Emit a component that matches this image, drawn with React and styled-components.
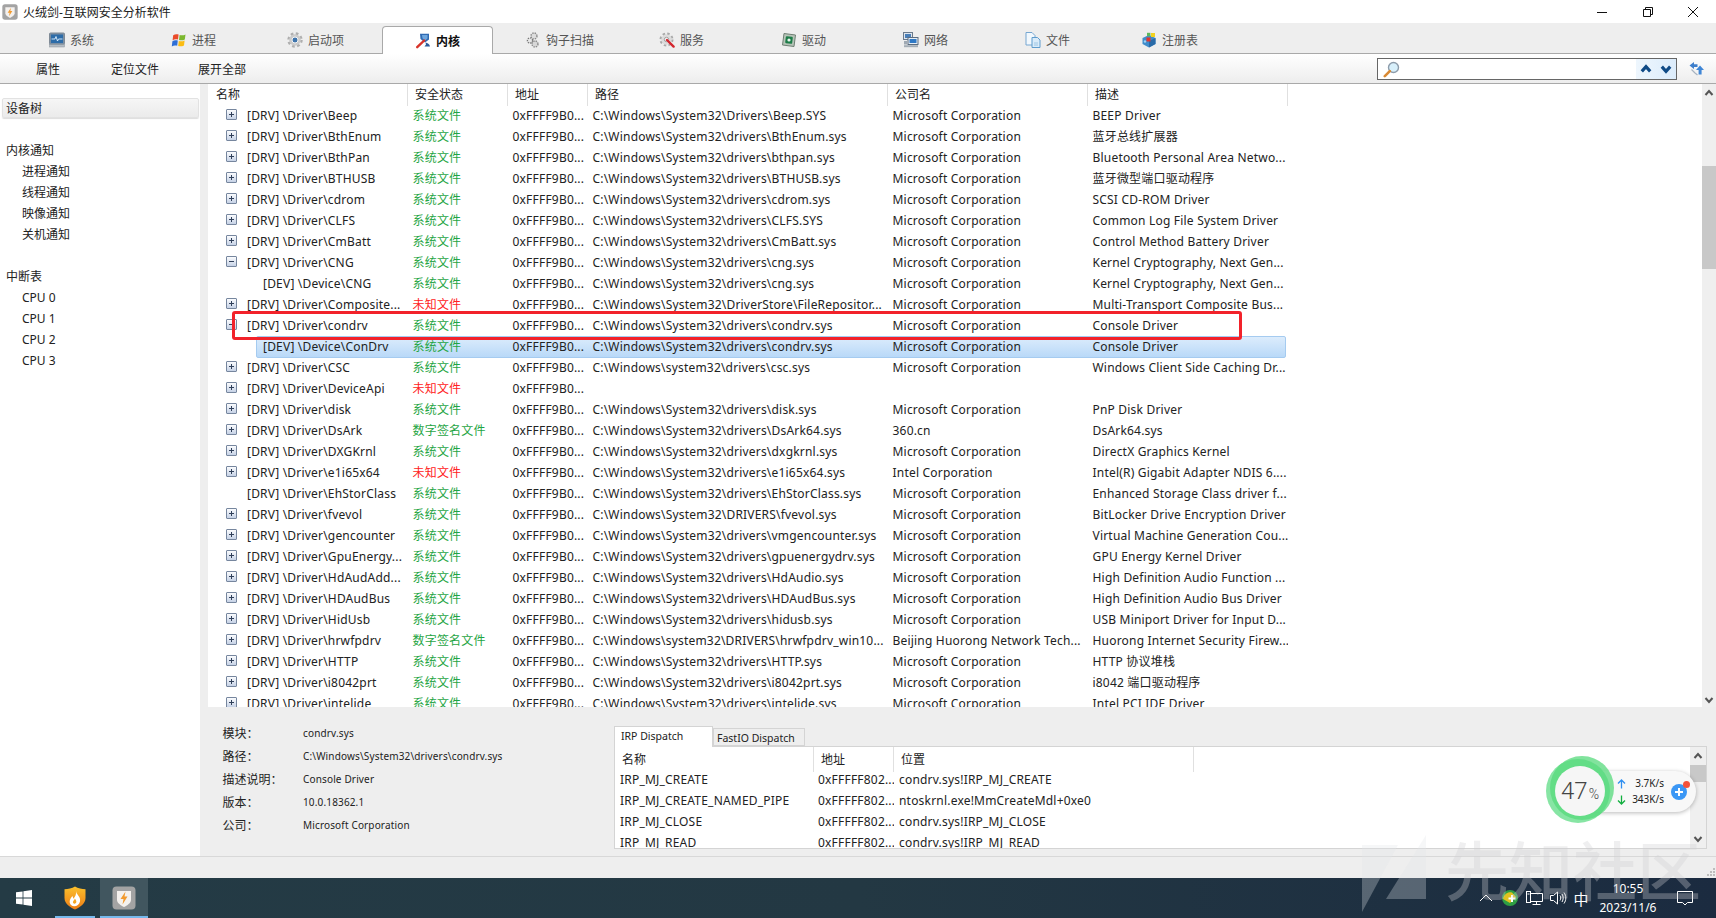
import React from "react";
import styled, { createGlobalStyle } from "styled-components";

const FONT = `"Noto Sans", "Noto Sans CJK SC", sans-serif`;

const Global = createGlobalStyle`
  html, body { margin: 0; padding: 0; background: #fff; }
  body { font-family: ${FONT}; font-size: 12px; color: #222; overflow: hidden; }
  * { box-sizing: border-box; }
`;

const Page = styled.div`
  position: relative;
  width: 1716px;
  height: 918px;
  overflow: hidden;
  display: flex;
  flex-direction: column;
`;

/* ---------- title bar ---------- */
const TitleBar = styled.header`
  height: 23px;
  flex: none;
  display: flex;
  align-items: center;
  padding-left: 2px;
  background: #fff;
`;
const TitleText = styled.span`
  margin-left: 5px;
  font-size: 12px;
  color: #222;
`;
const WindowButtons = styled.div`
  margin-left: auto;
  display: flex;
  padding-right: 0;
`;
const WindowButton = styled.button`
  width: 45.67px;
  height: 20px;
  border: 0;
  padding: 0;
  background: none;
  display: flex;
  align-items: center;
  justify-content: center;
`;

/* ---------- tabs ---------- */
const TabStrip = styled.nav`
  height: 31px;
  flex: none;
  display: flex;
  padding-left: 10.5px;
  background: #eee;
  border-bottom: 1px solid #a9a9a9;
`;
const Tab = styled.div`
  width: 122px;
  height: ${(p) => (p.$active ? "28px" : "27px")};
  margin-top: 3px;
  display: flex;
  align-items: center;
  justify-content: center;
  gap: 5px;
  color: ${(p) => (p.$active ? "#111" : "#555")};
  font-weight: ${(p) => (p.$active ? 700 : 400)};
  background: ${(p) => (p.$active ? "#fff" : "transparent")};
  border: ${(p) => (p.$active ? "1px solid #a9a9a9" : "0")};
  border-bottom: 0;
  border-radius: 4px 4px 0 0;
  ${(p) => (p.$active ? "margin-left: 5.5px; margin-right: 5.5px; width: 111px;" : "")}
`;

/* ---------- toolbar ---------- */
const Toolbar = styled.div`
  height: 30px;
  flex: none;
  display: flex;
  align-items: center;
  padding-left: 4.5px;
  background: linear-gradient(#fff, #ededed);
  border-bottom: 1px solid #a9a9a9;
`;
const ToolButton = styled.div`
  width: 87px;
  text-align: center;
  color: #222;
`;
const SearchBox = styled.div`
  margin-left: auto;
  width: 300px;
  height: 22px;
  display: flex;
  align-items: stretch;
  border: 1px solid #666;
  background: #fff;
`;
const SearchIconWrap = styled.div`
  flex: 1;
  padding: 2px 0 0 5px;
`;
const SearchArrows = styled.div`
  width: 40px;
  display: flex;
  align-items: center;
  justify-content: space-around;
  background: linear-gradient(90deg, #eef6fd, #dcecfb);
`;
const SyncWrap = styled.div`
  width: 39px;
  display: flex;
  justify-content: center;
`;

/* ---------- body ---------- */
const Body = styled.main`
  height: 773px;
  flex: none;
  display: flex;
  border-bottom: 1px solid #d8d8d8;
`;
const Sidebar = styled.aside`
  width: 200px;
  flex: none;
  background: #fff;
  padding-top: 14px;
`;
const SideButton = styled.div`
  height: 20px;
  margin: 0 1px 21.5px 2px;
  padding-left: 3px;
  line-height: 19px;
  border: 1px solid #e2e2e2;
  border-radius: 2px;
  background: linear-gradient(#f6f6f6, #ebebeb);
  box-shadow: 0 1px 1px #ddd;
`;
const SideGroup = styled.div`
  margin-bottom: 21px;
`;
const SideHeading = styled.div`
  height: 21px;
  line-height: 21px;
  padding-left: 6px;
`;
const SideItem = styled.div`
  height: 21px;
  line-height: 21px;
  padding-left: 22px;
`;
const RightColumn = styled.div`
  flex: 1;
  min-width: 0;
  background: #eee;
  display: flex;
  flex-direction: column;
`;
const TableArea = styled.section`
  height: 623px;
  flex: none;
  margin-left: 8px;
  display: flex;
  background: #fff;
`;
const TableMain = styled.div`
  flex: 1;
  min-width: 0;
  display: flex;
  flex-direction: column;
`;
const HeaderRow = styled.div`
  height: 21px;
  flex: none;
  display: grid;
  grid-template-columns: 200px 100px 80px 300px 200px 200px;
`;
const HeaderCell = styled.div`
  padding-left: 7px;
  line-height: 22px;
  border-right: 1px solid #e0e0e0;
  color: #222;
  &:first-child {
    padding-left: 8px;
  }
`;
const Rows = styled.div`
  flex: 1;
  overflow: hidden;
`;
const Row = styled.div`
  position: relative;
  height: 21px;
  display: grid;
  grid-template-columns: 200px 100px 80px 300px 200px 200px;
  line-height: 21px;
  letter-spacing: 0.2px;
  &::before {
    content: "";
    display: ${(p) => (p.$selected ? "block" : "none")};
    position: absolute;
    left: 47.5px;
    width: 1028px;
    top: 0;
    height: 20px;
    border: 1px solid #a5cbf0;
    border-radius: 2px;
    background: linear-gradient(#dcecfc, #b9d9f8);
  }
`;
const Cell = styled.div`
  position: relative;
  padding-left: 4.5px;
  white-space: nowrap;
  overflow: hidden;
  color: ${(p) => p.$color || "#222"};
`;
const NameCell = styled.div`
  position: relative;
  display: flex;
  align-items: center;
  padding-left: ${(p) => (p.$child ? "55px" : "18px")};
  white-space: nowrap;
  overflow: hidden;
`;
const Expander = styled.span`
  position: relative;
  flex: none;
  width: 11px;
  height: 11px;
  margin: 0 10px 3px 0;
  border: 1px solid #76869e;
  border-radius: 1px;
  background: linear-gradient(#fbfcfe, #c6d2e6);
  visibility: ${(p) => (p.$hidden ? "hidden" : "visible")};
  &::before {
    content: "";
    position: absolute;
    left: 2px;
    top: 4px;
    width: 5px;
    height: 1px;
    background: #30405a;
  }
  &::after {
    content: "";
    display: ${(p) => (p.$open ? "none" : "block")};
    position: absolute;
    left: 4px;
    top: 2px;
    width: 1px;
    height: 5px;
    background: #30405a;
  }
`;
const Scrollbar = styled.div`
  width: ${(p) => p.$width}px;
  flex: none;
  display: flex;
  flex-direction: column;
  background: #efefef;
`;
const ScrollArrow = styled.div`
  height: ${(p) => p.$h}px;
  flex: none;
  display: flex;
  align-items: center;
  justify-content: center;
`;
const ScrollTrack = styled.div`
  flex: 1;
  min-height: 0;
`;
const ScrollThumb = styled.div`
  margin-top: ${(p) => p.$top}px;
  height: ${(p) => p.$h}px;
  background: #c8c8c8;
`;

/* ---------- bottom details ---------- */
const BottomPanel = styled.section`
  flex: 1;
  min-height: 0;
  display: flex;
`;
const Info = styled.div`
  width: 414px;
  flex: none;
  padding: 14.5px 0 0 22.5px;
`;
const InfoRow = styled.div`
  display: flex;
  height: 23px;
  line-height: 23px;
`;
const InfoLabel = styled.span`
  width: 80.5px;
  flex: none;
  color: #222;
`;
const InfoValue = styled.span`
  font-size: 10px;
  letter-spacing: 0.15px;
  color: #222;
`;
const Dispatch = styled.div`
  flex: 1;
  min-width: 0;
  margin: 19px 9px 0 0;
  display: flex;
  flex-direction: column;
`;
const DispatchTabs = styled.div`
  height: 20px;
  flex: none;
  display: flex;
  align-items: flex-end;
`;
const DispatchTab = styled.div`
  width: ${(p) => p.$w}px;
  height: ${(p) => (p.$active ? "21px" : "18px")};
  margin-bottom: ${(p) => (p.$active ? "-1px" : "0")};
  padding-left: ${(p) => (p.$active ? "6px" : "3px")};
  line-height: ${(p) => (p.$active ? "19px" : "18px")};
  font-size: 10.5px;
  position: relative;
  background: ${(p) => (p.$active ? "#fff" : "#eee")};
  border: 1px solid #d4d4d4;
  border-bottom: ${(p) => (p.$active ? "0" : "1px solid #d4d4d4")};
`;
const DispatchBox = styled.div`
  height: 103px;
  flex: none;
  display: flex;
  border: 1px solid #d4d4d4;
  background: #fff;
  overflow: hidden;
`;
const DispatchMain = styled.div`
  flex: 1;
  min-width: 0;
`;
const DispatchHead = styled.div`
  height: 22px;
  display: grid;
  grid-template-columns: 199px 80px 300px;
`;
const DispatchHeadCell = styled.div`
  padding-left: 7px;
  line-height: 25px;
  border-right: 1px solid #e0e0e0;
`;
const DispatchRow = styled.div`
  height: 21px;
  display: grid;
  grid-template-columns: 199px 80px 300px;
  line-height: 22px;
  letter-spacing: 0.2px;
`;
const DispatchCell = styled.div`
  padding-left: ${(p) => p.$pad}px;
  white-space: nowrap;
  overflow: hidden;
`;

/* ---------- status / taskbar ---------- */
const StatusBar = styled.div`
  height: 21px;
  flex: none;
  display: flex;
  justify-content: flex-end;
  align-items: flex-end;
  background: #eee;
`;
const Taskbar = styled.footer`
  height: 40px;
  flex: none;
  display: flex;
  align-items: stretch;
  background: linear-gradient(90deg, #243b45 0%, #233843 50%, #1b2b40 100%);
  color: #fff;
`;
const TaskStart = styled.div`
  width: 48px;
  display: flex;
  align-items: center;
  justify-content: center;
`;
const TaskApp = styled.div`
  width: ${(p) => p.$w}px;
  display: flex;
  align-items: center;
  justify-content: center;
  background: ${(p) => (p.$active ? "#41565f" : "transparent")};
  box-shadow: inset 0 -2px 0 ${(p) => (p.$line ? "#76b9ed" : "transparent")};
  margin: ${(p) => (p.$inset ? "0 5px 0 6.5px" : "0")};
`;
const Tray = styled.div`
  margin-left: auto;
  display: flex;
  align-items: center;
  padding-right: 10px;
`;
const TrayItem = styled.div`
  width: ${(p) => p.$w}px;
  display: flex;
  align-items: center;
  justify-content: center;
  font-size: ${(p) => p.$size || 12}px;
`;
const Clock = styled.div`
  width: 72px;
  height: 40px;
  display: flex;
  flex-direction: column;
  align-items: center;
  justify-content: center;
  gap: 3px;
  font-size: 12px;
  line-height: 16px;
  padding-bottom: 0;
`;

/* ---------- overlays ---------- */
const RedBox = styled.div`
  position: absolute;
  left: 232px;
  top: 310.5px;
  width: 1010px;
  height: 29px;
  border: 3px solid #f2222a;
  border-radius: 3px;
  pointer-events: none;
`;
const Widget = styled.div`
  position: absolute;
  left: 1546px;
  top: 755px;
  width: 152px;
  height: 70px;
`;
const Pill = styled.div`
  position: absolute;
  left: 34px;
  top: 16px;
  width: 116px;
  height: 41px;
  padding-left: 37px;
  display: flex;
  align-items: center;
  border-radius: 21px;
  background: #f8f8f8;
  box-shadow: 0 1px 4px rgba(0, 0, 0, 0.28);
`;
const Speeds = styled.div`
  width: 47px;
  display: flex;
  flex-direction: column;
  gap: 1px;
  font-size: 10px;
  line-height: 15px;
  color: #222;
`;
const SpeedRow = styled.div`
  display: flex;
  align-items: center;
  justify-content: space-between;
`;
const Blob = styled.svg`
  position: absolute;
  left: 0;
  top: 0;
`;
const Percent = styled.div`
  position: absolute;
  left: 9px;
  top: 11px;
  width: 50px;
  height: 50px;
  display: flex;
  align-items: baseline;
  justify-content: center;
  font-family: Roboto, ${FONT};
  font-weight: 300;
  font-size: 24px;
  line-height: 50px;
  color: #444;
  small {
    font-size: 14px;
    margin-left: 1px;
  }
`;
const PlusBadge = styled.div`
  position: relative;
  margin-left: 7px;
  width: 16px;
  height: 16px;
  border-radius: 50%;
  background: #3b97f5;
  display: flex;
  align-items: center;
  justify-content: center;
  &::after {
    content: "";
    position: absolute;
    right: -3px;
    top: -3px;
    width: 7px;
    height: 7px;
    border-radius: 50%;
    background: #f4523a;
  }
`;
const Watermark = styled.div`
  position: absolute;
  left: 1362px;
  top: 835px;
  width: 340px;
  height: 78px;
  display: flex;
  pointer-events: none;
`;
const WatermarkText = styled.div`
  margin-left: 18px;
  font-size: 64px;
  font-weight: 500;
  line-height: 72px;
  white-space: nowrap;
  color: rgba(205, 205, 210, 0.33);
`;

/* ---------- icons ---------- */
const Svg = ({ s = 16, children, ...rest }) => (
  <svg width={s} height={s} viewBox="0 0 16 16" {...rest}>
    {children}
  </svg>
);
const IconSystem = () => (
  <Svg>
    <rect x="0.5" y="1" width="15" height="11.5" rx="1" fill="#7c8fa3" stroke="#7f8a96" />
    <rect x="2" y="2.5" width="12" height="8.5" fill="#2d6ca8" />
    <path d="M2.5 7H6l1-2.5L8.5 9l1-2h4" stroke="#dff0ff" fill="none" strokeWidth="0.9" />
    <rect x="0.5" y="12.5" width="15" height="2.5" fill="#b4bcc4" stroke="#8a939b" strokeWidth="0.5" />
  </Svg>
);
const IconProcess = () => (
  <Svg>
    <path d="M2.2 3.2C4 2 5.8 2 7.6 2.6L7 7.6C5.2 7 3.4 7 1.6 8.2Z" fill="#ea4b2a" />
    <path d="M8.6 2.9C10.4 3.6 12.4 3.6 14.5 2.4L13.8 7.4C12 8.4 10 8.5 8 7.9Z" fill="#7cb82f" />
    <path d="M1.4 9.2C3.2 8 5 8 6.8 8.6L6.2 13.8C4.4 13.2 2.6 13.2 0.8 14.4Z" fill="#2f6fd6" />
    <path d="M7.8 8.9C9.6 9.6 11.6 9.5 13.6 8.4L13 13.4C11 14.5 9.2 14.6 7.2 14Z" fill="#fbbc12" />
  </Svg>
);
const IconStartup = () => (
  <Svg>
    <circle cx="8" cy="8" r="6.4" fill="none" stroke="#aeaeae" strokeWidth="2.6" strokeDasharray="2.6 2.43" />
    <circle cx="8" cy="8" r="5.8" fill="#cbcbcb" />
    <circle cx="8" cy="8" r="3" fill="#3f75ad" stroke="#f4f4f4" strokeWidth="1" />
  </Svg>
);
const IconKernel = () => (
  <Svg>
    <path d="M5 0.8H14V6.5L10 9.5L5.5 6Z" fill="#2f6ab3" />
    <path d="M7 2H12.5V5.5L10 7.5L7.5 5.2Z" fill="#6ea6de" />
    <path d="M10.5 9.5C12.5 9.8 14.5 11 15 13.5H9.5L11 11.5Z" fill="#2b5c9c" />
    <path d="M9.2 7.5L2.2 14.2" stroke="#d8342a" strokeWidth="2.4" strokeLinecap="round" />
  </Svg>
);
const IconHook = () => (
  <Svg>
    <circle cx="9" cy="4" r="3" fill="#ddd" stroke="#8a8a8a" strokeWidth="1.4" strokeDasharray="1.4 1" />
    <circle cx="5" cy="8.5" r="2.6" fill="#e6e6e6" stroke="#777" strokeWidth="1.3" strokeDasharray="1.4 1" />
    <circle cx="10" cy="12" r="3" fill="#d8d8d8" stroke="#8a8a8a" strokeWidth="1.4" strokeDasharray="1.4 1" />
  </Svg>
);
const IconService = () => (
  <Svg>
    <circle cx="7.5" cy="7.5" r="5.8" fill="none" stroke="#a9a9a9" strokeWidth="2.4" strokeDasharray="2.4 2.16" />
    <circle cx="7.5" cy="7.5" r="5.2" fill="#dcdcdc" />
    <circle cx="7.5" cy="7.5" r="2.2" fill="#f6f6f6" stroke="#8f8f8f" strokeWidth="0.8" />
    <path d="M8 8L14.6 14.6" stroke="#d3262e" strokeWidth="2.4" strokeLinecap="round" />
  </Svg>
);
const IconDriver = () => (
  <Svg>
    <path d="M3 1.5L14.5 3L13 14.5L1.5 13Z" fill="#b7c4b8" stroke="#6f7f74" />
    <rect x="4.5" y="4.5" width="7" height="7" rx="1" fill="#1d7c48" transform="rotate(7 8 8)" />
    <circle cx="8" cy="8" r="1.6" fill="#e8f5ec" />
  </Svg>
);
const IconNetwork = () => (
  <Svg>
    <rect x="0.5" y="0.5" width="9" height="7" fill="#dfe6ee" stroke="#6b7a8c" />
    <rect x="2" y="2" width="6" height="4" fill="#4a7fb8" />
    <rect x="5" y="5.5" width="10" height="7" fill="#e6edf4" stroke="#5c6d80" />
    <rect x="6.5" y="7" width="7" height="4" fill="#2f79c5" />
    <rect x="1" y="13.2" width="14" height="2" fill="#a4adb6" />
    <rect x="1" y="9" width="3" height="3.5" fill="#9fa9b3" />
  </Svg>
);
const IconFile = () => (
  <Svg>
    <path d="M1 0.5H7L10 3.5V13H1Z" fill="#f2f8fd" stroke="#76a7d2" />
    <path d="M7 5.5H12.5L15 8V15.5H7Z" fill="#d9ebf9" stroke="#5f9ccd" />
    <path d="M9 11H13M9 13H13" stroke="#8fbcdf" strokeWidth="0.8" />
  </Svg>
);
const IconRegistry = () => (
  <Svg>
    <path d="M8 3L14.5 6V12L8 15.5L1.5 12V6Z" fill="#3f8ccb" />
    <path d="M8 9L14.5 6V12L8 15.5Z" fill="#2a6ba8" />
    <rect x="5.5" y="5.5" width="4" height="4" fill="#e3342f" />
    <rect x="10" y="1" width="4" height="4" fill="#f2d21f" />
    <rect x="6" y="0.8" width="3.4" height="3.4" fill="#5cb85c" />
    <circle cx="4" cy="9.5" r="1.2" fill="#9fd2f5" />
  </Svg>
);
const AppLogo = ({ s = 16 }) => (
  <svg width={s} height={s} viewBox="0 0 24 24">
    <rect x="0.5" y="0.5" width="23" height="23" rx="4" fill="#a3a3a3" />
    <path d="M5 5H19V14C19 17 15 19.5 12 21C9 19.5 5 17 5 14Z" fill="#f4f1ee" />
    <path d="M13.5 5.5L8.5 13H11.5L10.5 18.5L15.5 10.5H12.5Z" fill="#f29a2e" />
  </svg>
);
const TaskShield = () => (
  <svg width="22" height="24" viewBox="0 0 22 24">
    <defs>
      <linearGradient id="shieldFill" x1="0" y1="0" x2="0" y2="1">
        <stop offset="0" stopColor="#fbc02c" />
        <stop offset="1" stopColor="#ee7d16" />
      </linearGradient>
    </defs>
    <path d="M11 0.5C14 2.5 18 3.2 21.5 3.2V12C21.5 18 15.5 21.5 11 23.5C6.5 21.5 0.5 18 0.5 12V3.2C4 3.2 8 2.5 11 0.5Z" fill="url(#shieldFill)" />
    <path d="M12 5C12.5 9 17 10.5 16 15.5C15.4 18.5 12.5 20.5 10 20.3C7 20 5.2 17.5 5.8 14.5C6.2 12.6 7.5 11.5 8.3 10C9 11 9.2 12 9.3 12.8C11 11 12.6 8.5 12 5Z" fill="#fff" />
    <path d="M10.8 12.5C11.8 14 12.8 15 12.2 16.6C11.8 17.6 10.6 18 9.8 17.5C8.8 17 8.8 15.6 9.5 14.7C10 14 10.6 13.5 10.8 12.5Z" fill="#f6a623" />
  </svg>
);
const Chevron = ({ up, color = "#555", w = 2, s = 10 }) => (
  <svg width={s} height={s} viewBox="0 0 10 10">
    <path d={up ? "M1.5 7L5 3L8.5 7" : "M1.5 3L5 7L8.5 3"} fill="none" stroke={color} strokeWidth={w} />
  </svg>
);

/* ---------- data ---------- */
const OK = "#1fa544";
const BAD = "#ff2222";
const S = "系统文件";
const MS = "Microsoft Corporation";
const ADDR = "0xFFFF9B0...";
const P = "C:\\Windows\\System32\\drivers\\";
const rows = [
  ["[DRV] \\Driver\\Beep", S, "C:\\Windows\\System32\\Drivers\\Beep.SYS", MS, "BEEP Driver"],
  ["[DRV] \\Driver\\BthEnum", S, P + "BthEnum.sys", MS, "蓝牙总线扩展器"],
  ["[DRV] \\Driver\\BthPan", S, P + "bthpan.sys", MS, "Bluetooth Personal Area Netwo..."],
  ["[DRV] \\Driver\\BTHUSB", S, P + "BTHUSB.sys", MS, "蓝牙微型端口驱动程序"],
  ["[DRV] \\Driver\\cdrom", S, P + "cdrom.sys", MS, "SCSI CD-ROM Driver"],
  ["[DRV] \\Driver\\CLFS", S, P + "CLFS.SYS", MS, "Common Log File System Driver"],
  ["[DRV] \\Driver\\CmBatt", S, P + "CmBatt.sys", MS, "Control Method Battery Driver"],
  ["[DRV] \\Driver\\CNG", S, P + "cng.sys", MS, "Kernel Cryptography, Next Gen...", "open"],
  ["[DEV] \\Device\\CNG", S, P + "cng.sys", MS, "Kernel Cryptography, Next Gen...", "child"],
  ["[DRV] \\Driver\\Composite...", "未知文件", "C:\\Windows\\System32\\DriverStore\\FileRepositor...", MS, "Multi-Transport Composite Bus..."],
  ["[DRV] \\Driver\\condrv", S, P + "condrv.sys", MS, "Console Driver", "open"],
  ["[DEV] \\Device\\ConDrv", S, P + "condrv.sys", MS, "Console Driver", "selected"],
  ["[DRV] \\Driver\\CSC", S, "C:\\Windows\\system32\\drivers\\csc.sys", MS, "Windows Client Side Caching Dr..."],
  ["[DRV] \\Driver\\DeviceApi", "未知文件", "", "", ""],
  ["[DRV] \\Driver\\disk", S, P + "disk.sys", MS, "PnP Disk Driver"],
  ["[DRV] \\Driver\\DsArk", "数字签名文件", P + "DsArk64.sys", "360.cn", "DsArk64.sys"],
  ["[DRV] \\Driver\\DXGKrnl", S, P + "dxgkrnl.sys", MS, "DirectX Graphics Kernel"],
  ["[DRV] \\Driver\\e1i65x64", "未知文件", P + "e1i65x64.sys", "Intel Corporation", "Intel(R) Gigabit Adapter NDIS 6...."],
  ["[DRV] \\Driver\\EhStorClass", S, P + "EhStorClass.sys", MS, "Enhanced Storage Class driver f...", "leaf"],
  ["[DRV] \\Driver\\fvevol", S, "C:\\Windows\\System32\\DRIVERS\\fvevol.sys", MS, "BitLocker Drive Encryption Driver"],
  ["[DRV] \\Driver\\gencounter", S, P + "vmgencounter.sys", MS, "Virtual Machine Generation Cou..."],
  ["[DRV] \\Driver\\GpuEnergy...", S, P + "gpuenergydrv.sys", MS, "GPU Energy Kernel Driver"],
  ["[DRV] \\Driver\\HdAudAdd...", S, P + "HdAudio.sys", MS, "High Definition Audio Function ..."],
  ["[DRV] \\Driver\\HDAudBus", S, P + "HDAudBus.sys", MS, "High Definition Audio Bus Driver"],
  ["[DRV] \\Driver\\HidUsb", S, P + "hidusb.sys", MS, "USB Miniport Driver for Input D..."],
  ["[DRV] \\Driver\\hrwfpdrv", "数字签名文件", "C:\\Windows\\system32\\DRIVERS\\hrwfpdrv_win10...", "Beijing Huorong Network Tech...", "Huorong Internet Security Firew..."],
  ["[DRV] \\Driver\\HTTP", S, P + "HTTP.sys", MS, "HTTP 协议堆栈"],
  ["[DRV] \\Driver\\i8042prt", S, P + "i8042prt.sys", MS, "i8042 端口驱动程序"],
  ["[DRV] \\Driver\\intelide", S, P + "intelide.sys", MS, "Intel PCI IDE Driver"],
];
const tabs = [
  ["系统", IconSystem],
  ["进程", IconProcess],
  ["启动项", IconStartup],
  ["内核", IconKernel],
  ["钩子扫描", IconHook],
  ["服务", IconService],
  ["驱动", IconDriver],
  ["网络", IconNetwork],
  ["文件", IconFile],
  ["注册表", IconRegistry],
];
const info = [
  ["模块：", "condrv.sys"],
  ["路径：", "C:\\Windows\\System32\\drivers\\condrv.sys"],
  ["描述说明：", "Console Driver"],
  ["版本：", "10.0.18362.1"],
  ["公司：", "Microsoft Corporation"],
];
const dispatch = [
  ["IRP_MJ_CREATE", "0xFFFFF802...", "condrv.sys!IRP_MJ_CREATE"],
  ["IRP_MJ_CREATE_NAMED_PIPE", "0xFFFFF802...", "ntoskrnl.exe!MmCreateMdl+0xe0"],
  ["IRP_MJ_CLOSE", "0xFFFFF802...", "condrv.sys!IRP_MJ_CLOSE"],
  ["IRP_MJ_READ", "0xFFFFF802...", "condrv.sys!IRP_MJ_READ"],
];

export default function App() {
  return (
    <Page>
      <Global />
      <TitleBar>
        <AppLogo />
        <TitleText>火绒剑-互联网安全分析软件</TitleText>
        <WindowButtons>
          <WindowButton>
            <svg width="10" height="10" viewBox="0 0 10 10"><path d="M0 5.5H10" stroke="#111" strokeWidth="1" /></svg>
          </WindowButton>
          <WindowButton>
            <svg width="10" height="10" viewBox="0 0 10 10"><path d="M0.5 2.5H7.5V9.5H0.5ZM2.5 2.5V0.5H9.5V7.5H7.5" fill="none" stroke="#111" strokeWidth="1" /></svg>
          </WindowButton>
          <WindowButton>
            <svg width="10" height="10" viewBox="0 0 10 10"><path d="M0 0L10 10M10 0L0 10" stroke="#111" strokeWidth="1" /></svg>
          </WindowButton>
        </WindowButtons>
      </TitleBar>

      <TabStrip>
        {tabs.map(([label, Icon], i) => (
          <Tab key={label} $active={i === 3}>
            <Icon />
            <span>{label}</span>
          </Tab>
        ))}
      </TabStrip>

      <Toolbar>
        <ToolButton>属性</ToolButton>
        <ToolButton>定位文件</ToolButton>
        <ToolButton>展开全部</ToolButton>
        <SearchBox>
          <SearchIconWrap>
            <svg width="17" height="17" viewBox="0 0 17 17">
              <circle cx="10.5" cy="6.5" r="5" fill="#d8f0fb" stroke="#8d9cab" strokeWidth="1.4" />
              <path d="M6.8 10.2L1.8 15.2" stroke="#d98a34" strokeWidth="2.6" strokeLinecap="round" />
            </svg>
          </SearchIconWrap>
          <SearchArrows>
            <Chevron up color="#0e4a86" w={2.6} s={12} />
            <Chevron color="#0e4a86" w={2.6} s={12} />
          </SearchArrows>
        </SearchBox>
        <SyncWrap>
          <svg width="15" height="15" viewBox="0 0 15 15">
            <path d="M5 1L0.5 4.5L5 8V6H8.5V3.2H5Z" fill="#3f7fcb" />
            <path d="M11 4.5L15 9H12.6V13.5H9.6V9H7Z" fill="#3f86d6" />
            <path d="M2.5 8.5L6 12L8.5 14" stroke="#a7b3c1" strokeWidth="1.2" fill="none" />
          </svg>
        </SyncWrap>
      </Toolbar>

      <Body>
        <Sidebar>
          <SideButton>设备树</SideButton>
          <SideGroup>
            <SideHeading>内核通知</SideHeading>
            <SideItem>进程通知</SideItem>
            <SideItem>线程通知</SideItem>
            <SideItem>映像通知</SideItem>
            <SideItem>关机通知</SideItem>
          </SideGroup>
          <SideGroup>
            <SideHeading>中断表</SideHeading>
            <SideItem>CPU 0</SideItem>
            <SideItem>CPU 1</SideItem>
            <SideItem>CPU 2</SideItem>
            <SideItem>CPU 3</SideItem>
          </SideGroup>
        </Sidebar>

        <RightColumn>
          <TableArea>
            <TableMain>
              <HeaderRow>
                {["名称", "安全状态", "地址", "路径", "公司名", "描述"].map((h) => (
                  <HeaderCell key={h}>{h}</HeaderCell>
                ))}
              </HeaderRow>
              <Rows>
                {rows.map(([name, status, path, company, desc, kind]) => {
                  const child = kind === "child" || kind === "selected";
                  return (
                    <Row key={name + path} $selected={kind === "selected"}>
                      <NameCell $child={child}>
                        {!child && <Expander $open={kind === "open"} $hidden={kind === "leaf"} />}
                        <span>{name}</span>
                      </NameCell>
                      <Cell $color={status === "未知文件" ? BAD : OK}>{status}</Cell>
                      <Cell>{ADDR}</Cell>
                      <Cell>{path}</Cell>
                      <Cell>{company}</Cell>
                      <Cell>{desc}</Cell>
                    </Row>
                  );
                })}
              </Rows>
            </TableMain>
            <Scrollbar $width={14}>
              <ScrollArrow $h={18}><Chevron up /></ScrollArrow>
              <ScrollTrack>
                <ScrollThumb $top={64} $h={103} />
              </ScrollTrack>
              <ScrollArrow $h={14}><Chevron /></ScrollArrow>
            </Scrollbar>
          </TableArea>

          <BottomPanel>
            <Info>
              {info.map(([label, value]) => (
                <InfoRow key={label}>
                  <InfoLabel>{label}</InfoLabel>
                  <InfoValue>{value}</InfoValue>
                </InfoRow>
              ))}
            </Info>
            <Dispatch>
              <DispatchTabs>
                <DispatchTab $active $w={99}>IRP Dispatch</DispatchTab>
                <DispatchTab $w={92}>FastIO Dispatch</DispatchTab>
              </DispatchTabs>
              <DispatchBox>
                <DispatchMain>
                  <DispatchHead>
                    {["名称", "地址", "位置"].map((h) => (
                      <DispatchHeadCell key={h}>{h}</DispatchHeadCell>
                    ))}
                  </DispatchHead>
                  {dispatch.map(([a, b, c]) => (
                    <DispatchRow key={a}>
                      <DispatchCell $pad={5}>{a}</DispatchCell>
                      <DispatchCell $pad={4}>{b}</DispatchCell>
                      <DispatchCell $pad={5}>{c}</DispatchCell>
                    </DispatchRow>
                  ))}
                </DispatchMain>
                <Scrollbar $width={16}>
                  <ScrollArrow $h={18}><Chevron up /></ScrollArrow>
                  <ScrollTrack>
                    <ScrollThumb $top={0} $h={17} />
                  </ScrollTrack>
                  <ScrollArrow $h={18}><Chevron /></ScrollArrow>
                </Scrollbar>
              </DispatchBox>
            </Dispatch>
          </BottomPanel>
        </RightColumn>
      </Body>

      <StatusBar>
        <svg width="12" height="10" viewBox="0 0 12 10" fill="#bdbdbd">
          <rect x="9" y="0" width="2" height="2" />
          <rect x="6" y="3" width="2" height="2" />
          <rect x="9" y="3" width="2" height="2" />
          <rect x="3" y="6" width="2" height="2" />
          <rect x="6" y="6" width="2" height="2" />
          <rect x="9" y="6" width="2" height="2" />
        </svg>
      </StatusBar>

      <Taskbar>
        <TaskStart>
          <svg width="16" height="16" viewBox="0 0 16 16">
            <path d="M0 2.3L6.6 1.4V7.6H0ZM7.4 1.3L16 0V7.6H7.4ZM0 8.4H6.6V14.6L0 13.7ZM7.4 8.4H16V16L7.4 14.7Z" fill="#fff" />
          </svg>
        </TaskStart>
        <TaskApp $w={40.5} $line $inset><TaskShield /></TaskApp>
        <TaskApp $w={48} $line $active><AppLogo s={24} /></TaskApp>
        <Tray>
          <TrayItem $w={24}>
            <svg width="14" height="8" viewBox="0 0 14 8"><path d="M1 7L7 1L13 7" fill="none" stroke="#fff" strokeWidth="1" /></svg>
          </TrayItem>
          <TrayItem $w={24}>
            <svg width="16" height="16" viewBox="0 0 16 16">
              <circle cx="8" cy="8" r="8" fill="#2f9e44" />
              <path d="M1 9C2 4 6 1.5 10 2.5L14 7L8 13Z" fill="#e0c21f" />
              <path d="M10 5V12M6.5 8.5H13.5" stroke="#fff" strokeWidth="2" />
            </svg>
          </TrayItem>
          <TrayItem $w={24}>
            <svg width="17" height="16" viewBox="0 0 17 16" fill="none" stroke="#fff" strokeWidth="1">
              <path d="M4.5 3.5H16.5V11.5H4.5M10.5 11.5V14.5M6.5 14.5H14.5" />
              <rect x="0.5" y="1.5" width="4" height="11" />
              <path d="M1.5 4H3.5" />
            </svg>
          </TrayItem>
          <TrayItem $w={24}>
            <svg width="17" height="14" viewBox="0 0 17 14" fill="none" stroke="#fff" strokeWidth="1">
              <path d="M0.5 4.5H3.5L7.5 1V13L3.5 9.5H0.5Z" />
              <path d="M10 4.5C11 6 11 8 10 9.5M12 3C13.6 5.5 13.6 8.5 12 11M14 1.5C16.4 5 16.4 9 14 12.5" />
            </svg>
          </TrayItem>
          <TrayItem $w={22} $size={15}>中</TrayItem>
          <Clock>
            <span>10:55</span>
            <span>2023/11/6</span>
          </Clock>
          <TrayItem $w={42}>
            <svg width="16" height="16" viewBox="0 0 16 16"><path d="M0.5 1.5H15.5V12.5H10.5L8 15L5.5 12.5H0.5Z" fill="none" stroke="#fff" strokeWidth="1" /></svg>
          </TrayItem>
        </Tray>
      </Taskbar>

      <RedBox />

      <Widget>
        <Pill>
          <Speeds>
            <SpeedRow>
              <svg width="9" height="10" viewBox="0 0 9 10"><path d="M4.5 9.5V1M1 4.5L4.5 1L8 4.5" fill="none" stroke="#2f8ff0" strokeWidth="1.3" /></svg>
              <span>3.7K/s</span>
            </SpeedRow>
            <SpeedRow>
              <svg width="9" height="10" viewBox="0 0 9 10"><path d="M4.5 0.5V9M1 5.5L4.5 9L8 5.5" fill="none" stroke="#12b03f" strokeWidth="1.3" /></svg>
              <span>343K/s</span>
            </SpeedRow>
          </Speeds>
          <PlusBadge>
            <svg width="10" height="10" viewBox="0 0 10 10"><path d="M5 1V9M1 5H9" stroke="#fff" strokeWidth="2" /></svg>
          </PlusBadge>
        </Pill>
        <Blob width="70" height="70" viewBox="0 0 70 70">
          <circle cx="32" cy="36" r="32" fill="#5fdc85" opacity="0.75" />
          <circle cx="36" cy="33" r="32" fill="#57d97c" opacity="0.75" />
          <circle cx="34" cy="36" r="25" fill="#f6f6f6" />
        </Blob>
        <Percent>47<small>%</small></Percent>
      </Widget>

      <Watermark>
        <svg width="65" height="78" viewBox="0 0 65 78">
          <path d="M0 10H36L0 77Z" fill="rgba(225,228,232,0.3)" />
          <path d="M64 0V64H24Z" fill="rgba(225,228,232,0.3)" />
        </svg>
        <WatermarkText>先知社区</WatermarkText>
      </Watermark>
    </Page>
  );
}
